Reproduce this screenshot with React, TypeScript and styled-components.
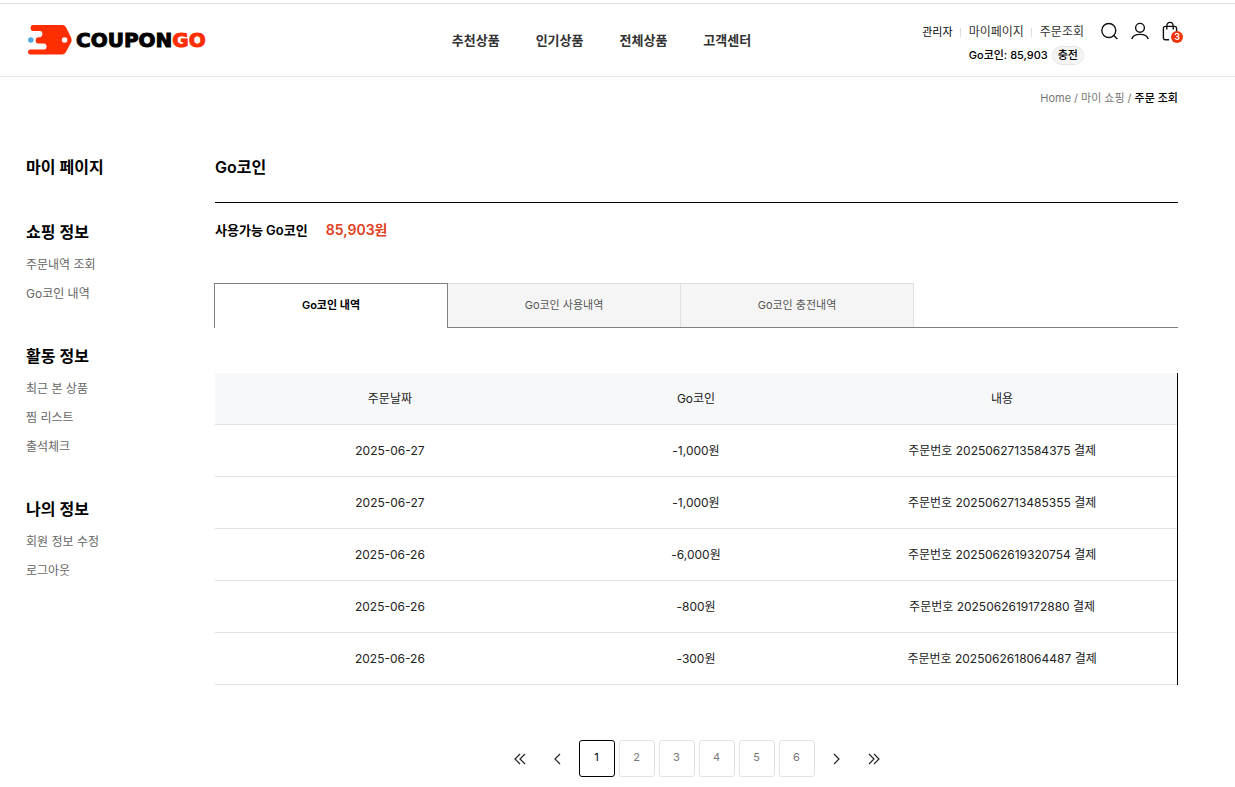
import React from "react";
import styled, { createGlobalStyle, css } from "styled-components";

const GlobalStyle = createGlobalStyle`
  * { box-sizing: border-box; }
  body {
    margin: 0;
    background: #fff;
    color: #000;
    font-family: Inter, "Noto Sans CJK KR", sans-serif;
    font-size: 12px;
    line-height: 20px;
  }
  h1, h2, h3, p, ul, ol, dl, dd { margin: 0; padding: 0; }
  ul, ol { list-style: none; }
  a { color: inherit; text-decoration: none; }
  button { font: inherit; color: inherit; background: none; border: 0; padding: 0; cursor: pointer; }
`;

const Page = styled.div`
  padding-top: 3px;
`;

const Header = styled.header`
  display: grid;
  grid-template-columns: 1fr auto 1fr;
  height: 74px;
  padding: 0 57px 0 25px;
  border-top: 1px solid #e0e0e0;
  border-bottom: 1px solid #e8e8e8;
`;

const Logo = styled.a`
  display: flex;
  align-items: center;
  gap: 3px;
  padding-left: 2px;
  font-family: "DejaVu Sans", sans-serif;
  font-size: 20px;
  font-weight: 700;
  line-height: 32px;
  -webkit-text-stroke: 1px currentColor;
  svg { display: block; }
`;

const LogoAccent = styled.span`
  color: #ff2e00;
`;

const MainNav = styled.nav`
  display: flex;
  align-items: center;
  gap: 36px;
  font-size: 13px;
  font-weight: 600;
  color: #333;
`;

const Utility = styled.div`
  display: flex;
  justify-content: flex-end;
  gap: 17px;
  padding-top: 17px;
`;

const Account = styled.div`
  display: flex;
  flex-direction: column;
  align-items: flex-end;
  gap: 3px;
  padding-top: 1px;
`;

const AccountLinks = styled.div`
  display: flex;
  align-items: center;
  color: #333;
  a + a {
    display: flex;
    align-items: center;
  }
  a + a::before {
    content: "";
    width: 1px;
    height: 9px;
    margin: 0 8px 0 7px;
    background: #ddd;
  }
`;

const AdminLink = styled.a`
  font-size: 11px;
  color: #000;
`;

const Coins = styled.div`
  display: flex;
  align-items: center;
  gap: 4px;
  font-size: 11px;
  font-weight: 500;
`;

const ChargeButton = styled.button`
  height: 19px;
  padding: 0 5px;
  border: 1px solid #e5e5e5;
  border-radius: 10px;
  background: #f5f5f5;
  line-height: 17px;
`;

const IconButtons = styled.div`
  display: flex;
  align-items: flex-start;
  gap: 13px;
  margin-right: -1px;
`;

const IconButton = styled.button`
  position: relative;
  height: 20px;
  svg { display: block; }
`;

const Badge = styled.span`
  position: absolute;
  left: 9px;
  top: 10px;
  width: 12px;
  height: 12px;
  border-radius: 50%;
  background: #f1360f;
  color: #fff;
  font-size: 9px;
  font-weight: 600;
  line-height: 12px;
`;

const Breadcrumb = styled.nav`
  padding: 11px 57px 0 25px;
  ol {
    display: flex;
    justify-content: flex-end;
    gap: 3px;
    font-size: 11px;
    color: #777;
  }
  li + li::before {
    content: "/";
    margin-right: 3px;
    color: #777;
  }
  [aria-current] {
    font-weight: 500;
    color: #000;
  }
`;

const Body = styled.div`
  display: grid;
  grid-template-columns: 189px 1fr;
  padding: 47px 57px 10px 26px;
`;

const Title = styled.h2`
  font-size: 16px;
  font-weight: 600;
  line-height: 24px;
`;

const SideGroup = styled.section`
  margin-top: 36px;
  &:first-of-type { margin-top: 41px; }
  ul { padding-top: 6px; }
  li { line-height: 29px; color: #666; }
`;

const PageTitle = styled(Title)`
  padding-bottom: 23px;
  border-bottom: 1px solid #000;
`;

const Balance = styled.dl`
  display: flex;
  gap: 18px;
  padding-top: 17px;
  font-size: 13px;
  font-weight: 600;
  dd { color: #e0401c; font-size: 14px; }
`;

const Tabs = styled.div`
  display: flex;
  margin: 43px 0 0 -1px;
  border-bottom: 1px solid #808080;
`;

const Tab = styled.button<{ $active?: boolean }>`
  width: 233px;
  height: 44px;
  padding-bottom: 2px;
  border: solid #e0e0e0;
  border-width: 1px 1px 0 0;
  background: #f5f5f5;
  color: #555;
  font-size: 11px;
  ${(p) =>
    p.$active &&
    css`
      width: 234px;
      height: 45px;
      margin-bottom: -1px;
      padding-bottom: 3px;
      border-color: #808080;
      border-width: 1px 1px 0 1px;
      background: #fff;
      color: #000;
      font-weight: 600;
    `}
`;

const CoinTable = styled.table`
  width: 100%;
  margin-top: 45px;
  table-layout: fixed;
  border-collapse: separate;
  border-spacing: 0;
  border-right: 1px solid #000;
  color: #222;
  text-align: center;
  th, td {
    height: 52px;
    padding: 0;
    border-bottom: 1px solid #e2e2e2;
  }
  th {
    background: #f7f8fa;
    font-weight: 400;
  }
`;

const WideCol = styled.col`
  width: calc(100% * 4 / 11);
`;

const Pagination = styled.nav`
  display: flex;
  justify-content: center;
  gap: 4px;
  margin-top: 55px;
`;

const ArrowButton = styled.button`
  display: flex;
  align-items: center;
  justify-content: center;
  width: 34px;
  height: 37px;
`;

const PageButton = styled.button<{ $current?: boolean }>`
  width: 36px;
  height: 37px;
  padding-bottom: 3px;
  border: 1px solid ${(p) => (p.$current ? "#000" : "#e2e2e2")};
  border-radius: 3px;
  color: ${(p) => (p.$current ? "#000" : "#777")};
  font-size: 11px;
`;

const navItems = ["추천상품", "인기상품", "전체상품", "고객센터"];

const sideGroups = [
  { title: "쇼핑 정보", links: ["주문내역 조회", "Go코인 내역"] },
  { title: "활동 정보", links: ["최근 본 상품", "찜 리스트", "출석체크"] },
  { title: "나의 정보", links: ["회원 정보 수정", "로그아웃"] },
];

const tabs = ["Go코인 내역", "Go코인 사용내역", "Go코인 충전내역"];

const rows = [
  ["2025-06-27", "-1,000원", "주문번호 2025062713584375 결제"],
  ["2025-06-27", "-1,000원", "주문번호 2025062713485355 결제"],
  ["2025-06-26", "-6,000원", "주문번호 2025062619320754 결제"],
  ["2025-06-26", "-800원", "주문번호 2025062619172880 결제"],
  ["2025-06-26", "-300원", "주문번호 2025062618064487 결제"],
];

const LogoMark = () => (
  <svg width="46" height="30" viewBox="0 0 46 30" aria-hidden="true">
    <path
      fill="#ff2e00"
      d="M6 0H35.5Q37.6 0 38.7 1.8L44.3 13Q45 15 44.3 17L38.7 27.6Q37.6 29.4 35.5 29.4H3Q1 29.4 1 27Q1 24.4 3 24.4H17.5Q19.6 24.2 19.6 21.6Q19.6 18.8 17 18.4H11Q8.6 18 8.6 15.4Q8.6 12.6 11 12.2H13.4Q15.4 11.8 15.4 9Q15.4 6.2 13 6H6Q3.6 6 3.6 3Q3.6 0 6 0Z"
    />
    <circle cx="3.8" cy="15" r="2.8" fill="#52a9e0" />
    <circle cx="37.6" cy="15" r="2.8" fill="#fff" />
  </svg>
);

const Arrow = ({ double, right }: { double?: boolean; right?: boolean }) => (
  <svg width="12" height="12" viewBox="0 0 12 12" fill="none" stroke="#222" strokeWidth="1.2" aria-hidden="true">
    {right ? (
      <path d={double ? "M1 1L6 6L1 11M6 1L11 6L6 11" : "M4 1L9 6L4 11"} />
    ) : (
      <path d={double ? "M6 1L1 6L6 11M11 1L6 6L11 11" : "M8 1L3 6L8 11"} />
    )}
  </svg>
);

export default function App() {
  return (
    <>
      <GlobalStyle />
      <Page>
        <Header>
          <Logo href="#" aria-label="COUPONGO">
            <LogoMark />
            <span>
              COUPON<LogoAccent>GO</LogoAccent>
            </span>
          </Logo>
          <MainNav>
            {navItems.map((item) => (
              <a href="#" key={item}>{item}</a>
            ))}
          </MainNav>
          <Utility>
            <Account>
              <AccountLinks>
                <AdminLink href="#">관리자</AdminLink>
                <a href="#">마이페이지</a>
                <a href="#">주문조회</a>
              </AccountLinks>
              <Coins>
                <span>Go코인: 85,903</span>
                <ChargeButton>충전</ChargeButton>
              </Coins>
            </Account>
            <IconButtons>
              <IconButton aria-label="검색">
                <svg width="17" height="20" viewBox="0 0 17 20" fill="none" stroke="#111" strokeWidth="1.4">
                  <circle cx="7.8" cy="9.5" r="7" />
                  <path d="M12.8 14.5L16.4 18" />
                </svg>
              </IconButton>
              <IconButton aria-label="내 계정">
                <svg width="18" height="20" viewBox="0 0 18 20" fill="none" stroke="#111" strokeWidth="1.4">
                  <circle cx="9" cy="6.8" r="4.4" />
                  <path d="M0.8 18C1.8 14.6 5 13.4 9 13.4S16.2 14.6 17.2 18" />
                </svg>
              </IconButton>
              <IconButton aria-label="장바구니">
                <svg width="17" height="20" viewBox="0 0 17 20" fill="none" stroke="#111" strokeWidth="1.4">
                  <path d="M7 18.8H3.4Q1.4 18.8 1.4 16.8V7.4Q1.4 5.4 3.4 5.4H12.6Q14.6 5.4 14.6 7.4V11" />
                  <path d="M4.8 8.4V5.4Q4.8 1.4 8 1.4T11.2 5.4V8.4" />
                </svg>
                <Badge>3</Badge>
              </IconButton>
            </IconButtons>
          </Utility>
        </Header>

        <Breadcrumb aria-label="현재 위치">
          <ol>
            <li><a href="#">Home</a></li>
            <li><a href="#">마이 쇼핑</a></li>
            <li><span aria-current="page">주문 조회</span></li>
          </ol>
        </Breadcrumb>

        <Body>
          <aside>
            <Title>마이 페이지</Title>
            {sideGroups.map((group) => (
              <SideGroup key={group.title}>
                <Title as="h3">{group.title}</Title>
                <ul>
                  {group.links.map((link) => (
                    <li key={link}><a href="#">{link}</a></li>
                  ))}
                </ul>
              </SideGroup>
            ))}
          </aside>

          <main>
            <PageTitle as="h1">Go코인</PageTitle>
            <Balance>
              <dt>사용가능 Go코인</dt>
              <dd>85,903원</dd>
            </Balance>
            <Tabs role="tablist">
              {tabs.map((tab, i) => (
                <Tab key={tab} role="tab" aria-selected={i === 0} $active={i === 0}>{tab}</Tab>
              ))}
            </Tabs>
            <CoinTable>
              <colgroup>
                <WideCol />
                <col />
                <WideCol />
              </colgroup>
              <thead>
                <tr>
                  <th scope="col">주문날짜</th>
                  <th scope="col">Go코인</th>
                  <th scope="col">내용</th>
                </tr>
              </thead>
              <tbody>
                {rows.map((row) => (
                  <tr key={row[2]}>
                    {row.map((cell, i) => (
                      <td key={i}>{cell}</td>
                    ))}
                  </tr>
                ))}
              </tbody>
            </CoinTable>
            <Pagination aria-label="페이지">
              <ArrowButton aria-label="처음"><Arrow double /></ArrowButton>
              <ArrowButton aria-label="이전"><Arrow /></ArrowButton>
              {[1, 2, 3, 4, 5, 6].map((n) => (
                <PageButton key={n} $current={n === 1}>{n}</PageButton>
              ))}
              <ArrowButton aria-label="다음"><Arrow right /></ArrowButton>
              <ArrowButton aria-label="마지막"><Arrow double right /></ArrowButton>
            </Pagination>
          </main>
        </Body>
      </Page>
    </>
  );
}
